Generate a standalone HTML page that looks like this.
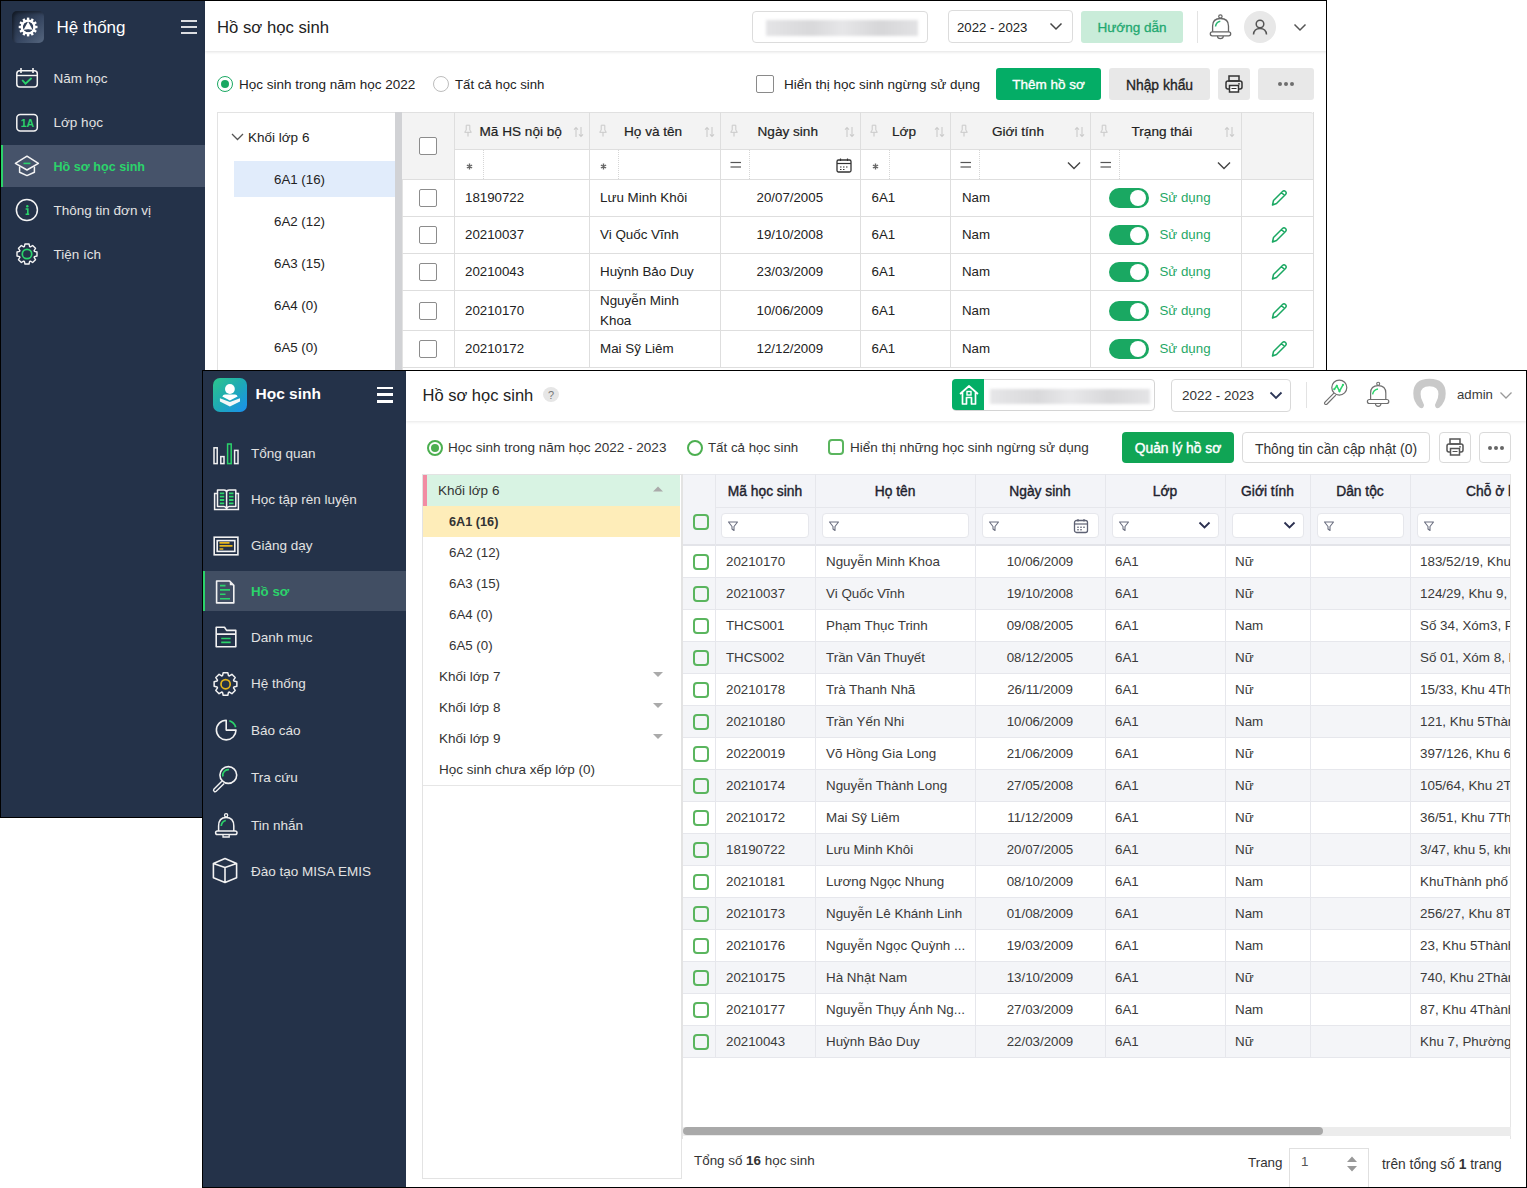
<!DOCTYPE html>
<html><head><meta charset="utf-8">
<style>
*{box-sizing:border-box;margin:0;padding:0}
html,body{width:1527px;height:1188px;overflow:hidden;background:#fff;font-family:"Liberation Sans",sans-serif;}
.a{position:absolute}
.t{position:absolute;white-space:nowrap;font-size:13.5px;color:#212121}
.frame{position:absolute;overflow:hidden;background:#fff}
.brd{position:absolute;border:1px solid #000}
</style></head><body>

<div class="frame" style="left:0;top:0;width:1327px;height:818px">
<div class="a" style="left:0px;top:0px;width:205px;height:818px;background:#243249"></div>
<div class="a" style="left:12px;top:11px;width:32px;height:32px;border-radius:5px;background:linear-gradient(135deg,#1c2739 0%,#354560 55%,#56677f 100%);box-shadow:inset 2px 2px 3px rgba(0,0,0,.35)"></div>
<svg class="a" style="left:12px;top:11px" width="32" height="32" viewBox="0 0 32 32"><g transform="translate(-12,-11)"><rect x="26.9" y="17.6" width="2.4" height="4" fill="#fff" transform="rotate(0 28.1 27)"/><rect x="26.9" y="17.6" width="2.4" height="4" fill="#fff" transform="rotate(30 28.1 27)"/><rect x="26.9" y="17.6" width="2.4" height="4" fill="#fff" transform="rotate(60 28.1 27)"/><rect x="26.9" y="17.6" width="2.4" height="4" fill="#fff" transform="rotate(90 28.1 27)"/><rect x="26.9" y="17.6" width="2.4" height="4" fill="#fff" transform="rotate(120 28.1 27)"/><rect x="26.9" y="17.6" width="2.4" height="4" fill="#fff" transform="rotate(150 28.1 27)"/><rect x="26.9" y="17.6" width="2.4" height="4" fill="#fff" transform="rotate(180 28.1 27)"/><rect x="26.9" y="17.6" width="2.4" height="4" fill="#fff" transform="rotate(210 28.1 27)"/><rect x="26.9" y="17.6" width="2.4" height="4" fill="#fff" transform="rotate(240 28.1 27)"/><rect x="26.9" y="17.6" width="2.4" height="4" fill="#fff" transform="rotate(270 28.1 27)"/><rect x="26.9" y="17.6" width="2.4" height="4" fill="#fff" transform="rotate(300 28.1 27)"/><rect x="26.9" y="17.6" width="2.4" height="4" fill="#fff" transform="rotate(330 28.1 27)"/><circle cx="28.1" cy="27" r="6.4" fill="none" stroke="#fff" stroke-width="2.4"/><path d="M28.1 21.5 L32.6 29.8 Q28.1 28.6 23.6 29.8 Z" fill="#fff"/><path d="M24.3 30.6 Q28.1 29 31.9 30.6 Q28.1 32.4 24.3 30.6 Z" fill="#34445e"/></g></svg>
<div class="t" style="left:56.5px;top:17.5px;line-height:20px;height:20px;font-size:17px;color:#fff">Hệ thống</div>
<div class="a" style="left:181px;top:20px;width:16px;height:2px;background:#dcdde0"></div>
<div class="a" style="left:181px;top:26px;width:16px;height:2px;background:#dcdde0"></div>
<div class="a" style="left:181px;top:32px;width:16px;height:2px;background:#dcdde0"></div>
<div class="a" style="left:0px;top:145px;width:205px;height:42px;background:#46536a"></div>
<div class="a" style="left:0px;top:145px;width:3px;height:42px;background:#2bd36b"></div>
<svg class="a" style="left:10px;top:62px" width="34" height="32" viewBox="0 0 34 32"><g transform="translate(-10,-62)"><rect x="16.8" y="70.8" width="20.5" height="16.3" rx="3" fill="none" stroke="#f4f4f4" stroke-width="1.5"/><line x1="21" y1="68" x2="21" y2="73" stroke="#f4f4f4" stroke-width="1.6"/><line x1="33" y1="68" x2="33" y2="73" stroke="#f4f4f4" stroke-width="1.6"/><line x1="16.8" y1="75.5" x2="37.3" y2="75.5" stroke="#f4f4f4" stroke-width="1.4"/><path d="M22.2 80 L25.5 83.7 L31.6 78" fill="none" stroke="#2bd36b" stroke-width="1.8"/></g></svg>
<div class="t" style="left:53.5px;top:69.0px;line-height:20px;height:20px;font-size:13.5px;color:#e2e2e2">Năm học</div>
<svg class="a" style="left:10px;top:108px" width="34" height="30" viewBox="0 0 34 30"><g transform="translate(-10,-108)"><rect x="16.8" y="114.6" width="20.5" height="16.5" rx="3.5" fill="none" stroke="#f4f4f4" stroke-width="1.5"/><text x="27.3" y="127.1" text-anchor="middle" font-family="Liberation Sans" font-size="10.6" font-weight="bold" fill="#2bd36b" letter-spacing="-0.3">1A</text></g></svg>
<div class="t" style="left:53.5px;top:113.0px;line-height:20px;height:20px;font-size:13.5px;color:#e2e2e2">Lớp học</div>
<svg class="a" style="left:10px;top:150px" width="34" height="32" viewBox="0 0 34 32"><g transform="translate(-10,-150)"><path d="M27 156.2 L38.4 163.4 L27 170 L15.4 163.4 Z" fill="none" stroke="#f4f4f4" stroke-width="1.5" stroke-linejoin="round"/><path d="M19.6 166.5 V172.3 L27 175.6 L34.4 172.3 V166.5" fill="none" stroke="#f4f4f4" stroke-width="1.5" stroke-linejoin="round"/><line x1="23.5" y1="163.4" x2="30.4" y2="163.4" stroke="#2bd36b" stroke-width="1.6"/></g></svg>
<div class="t" style="left:53.5px;top:157.0px;line-height:20px;height:20px;font-size:12.6px;font-weight:bold;color:#2bd36b">Hồ sơ học sinh</div>
<svg class="a" style="left:10px;top:194px" width="34" height="32" viewBox="0 0 34 32"><g transform="translate(-10,-194)"><circle cx="26.9" cy="210" r="10.5" fill="none" stroke="#f4f4f4" stroke-width="1.5"/><circle cx="27.3" cy="206.3" r="1.2" fill="#2bd36b"/><path d="M25.6 209 H27.8 V214 M25.6 214.2 H29.2" fill="none" stroke="#2bd36b" stroke-width="1.6"/></g></svg>
<div class="t" style="left:53.5px;top:201.0px;line-height:20px;height:20px;font-size:13.5px;color:#e2e2e2">Thông tin đơn vị</div>
<svg class="a" style="left:10px;top:238px" width="34" height="32" viewBox="0 0 34 32"><g transform="translate(-10,-238)"><polygon points="24.97,244.00 29.03,244.00 29.63,246.55 30.40,246.87 32.64,245.50 35.50,248.36 34.13,250.60 34.45,251.37 37.00,251.97 37.00,256.03 34.45,256.63 34.13,257.40 35.50,259.64 32.64,262.50 30.40,261.13 29.63,261.45 29.03,264.00 24.97,264.00 24.37,261.45 23.60,261.13 21.36,262.50 18.50,259.64 19.87,257.40 19.55,256.63 17.00,256.03 17.00,251.97 19.55,251.37 19.87,250.60 18.50,248.36 21.36,245.50 23.60,246.87 24.37,246.55" fill="none" stroke="#f4f4f4" stroke-width="1.4" stroke-linejoin="round"/><circle cx="27" cy="254" r="4.7" fill="none" stroke="#2bd36b" stroke-width="1.7"/></g></svg>
<div class="t" style="left:53.5px;top:245.0px;line-height:20px;height:20px;font-size:13.5px;color:#e2e2e2">Tiện ích</div>
<div class="a" style="left:205px;top:0px;width:1122px;height:51px;background:#fff;box-shadow:0 1px 3px rgba(0,0,0,.12)"></div>
<div class="t" style="left:217px;top:18.0px;line-height:20px;height:20px;font-size:16.7px;color:#222">Hồ sơ học sinh</div>
<div class="a" style="left:752px;top:11px;width:176px;height:32px;border:1px solid #dcdcdc;border-radius:4px;background:#fff"></div>
<div class="a" style="left:766px;top:20px;width:152px;height:16px;background:linear-gradient(90deg,#e4e4e6,#d8d8da 30%,#e6e6e8 50%,#d6d6d8 75%,#e2e2e4);filter:blur(1.5px)"></div>
<div class="a" style="left:948px;top:10px;width:125px;height:33px;border:1px solid #dcdcdc;border-radius:4px;background:#fff"></div>
<div class="t" style="left:957px;top:18.0px;line-height:20px;height:20px;font-size:13.2px;color:#222">2022 - 2023</div>
<svg class="a" style="left:1049px;top:22px;" width="14" height="9" viewBox="0 0 14 9"><path d="M1.5 1.5 L7 7 L12.5 1.5" fill="none" stroke="#444" stroke-width="1.5"/></svg>
<div class="a" style="left:1081px;top:11px;width:102px;height:32px;background:#c9ecd9;border-radius:3px"></div>
<div class="t" style="left:1081px;width:102px;text-align:center;top:17.5px;line-height:20px;height:20px;font-size:13.5px;-webkit-text-stroke:0.3px #1fa870;color:#1fa870">Hướng dẫn</div>
<div class="a" style="left:1197px;top:11px;width:1px;height:32px;background:#e3e3e3"></div>
<svg class="a" style="left:1205px;top:10px" width="35" height="35" viewBox="0 0 35 35"><g transform="translate(-1205,-10)"><path d="M1212.6 31.8 V26 Q1212.6 18.5 1220.5 18.5 Q1228.5 18.5 1228.5 26 V31.8" fill="none" stroke="#666" stroke-width="1.3"/><rect x="1210.3" y="31.8" width="20.4" height="4" rx="2" fill="none" stroke="#666" stroke-width="1.3"/><circle cx="1220.4" cy="16.5" r="1.7" fill="none" stroke="#666" stroke-width="1.2"/><path d="M1217.5 36 Q1217.5 38.6 1220.4 38.6 Q1223.3 38.6 1223.3 36" fill="none" stroke="#666" stroke-width="1.2"/><path d="M1215.5 26.5 Q1216 22 1220.3 21.2" fill="none" stroke="#2bb673" stroke-width="1.5"/></g></svg>
<div class="a" style="left:1244px;top:11px;width:32px;height:32px;border-radius:50%;background:#e8e8e8"></div>
<svg class="a" style="left:1250px;top:17px;" width="20" height="20" viewBox="0 0 20 20"><circle cx="10" cy="7" r="3.8" fill="none" stroke="#555" stroke-width="1.5"/><path d="M3.5 17.5 Q4 11.5 10 11.5 Q16 11.5 16.5 17.5" fill="none" stroke="#555" stroke-width="1.5"/></svg>
<svg class="a" style="left:1293px;top:23px;" width="14" height="9" viewBox="0 0 14 9"><path d="M1.5 1.5 L7 7 L12.5 1.5" fill="none" stroke="#555" stroke-width="1.5"/></svg>
<div class="a" style="left:217px;top:76.0px;width:16px;height:16px;border-radius:50%;border:1.5px solid #1aa862;background:#fff"></div>
<div class="a" style="left:221px;top:80.0px;width:8px;height:8px;border-radius:50%;background:#1aa862"></div>
<div class="t" style="left:239px;top:75.0px;line-height:20px;height:20px;font-size:13.5px;color:#222">Học sinh trong năm học 2022</div>
<div class="a" style="left:433px;top:76.0px;width:16px;height:16px;border-radius:50%;border:1px solid #bdbdbd;background:#fff"></div>
<div class="t" style="left:455px;top:75.0px;line-height:20px;height:20px;font-size:13.2px;color:#222">Tất cả học sinh</div>
<div class="a" style="left:756px;top:75px;width:18px;height:18px;border:1px solid #8a8a8a;border-radius:2px;background:#fff"></div>
<div class="t" style="left:784px;top:75.0px;line-height:20px;height:20px;font-size:13.5px;color:#222">Hiển thị học sinh ngừng sử dụng</div>
<div class="a" style="left:996px;top:68px;width:105px;height:32px;background:#04ad66;border-radius:3px"></div>
<div class="t" style="left:996px;width:105px;text-align:center;top:74.5px;line-height:20px;height:20px;font-size:13.5px;-webkit-text-stroke:0.35px #fff;color:#fff">Thêm hồ sơ</div>
<div class="a" style="left:1109px;top:68px;width:101px;height:32px;background:#e8e8e8;border-radius:3px"></div>
<div class="t" style="left:1109px;width:101px;text-align:center;top:74.5px;line-height:20px;height:20px;font-size:13.9px;-webkit-text-stroke:0.3px #222;color:#222">Nhập khẩu</div>
<div class="a" style="left:1218px;top:68px;width:32px;height:32px;background:#e8e8e8;border-radius:3px"></div>
<svg class="a" style="left:1224px;top:74px;" width="20" height="20" viewBox="0 0 20 20"><rect x="5" y="2" width="10" height="5" fill="none" stroke="#333" stroke-width="1.5"/><rect x="2" y="7" width="16" height="8" rx="2" fill="none" stroke="#333" stroke-width="1.5"/><rect x="5.5" y="11.5" width="9" height="6.5" fill="#fff" stroke="#333" stroke-width="1.5"/><line x1="7.5" y1="14.5" x2="12.5" y2="14.5" stroke="#333" stroke-width="1"/><circle cx="15" cy="9.8" r="0.9" fill="#333"/></svg>
<div class="a" style="left:1258px;top:68px;width:56px;height:32px;background:#e8e8e8;border-radius:3px"></div>
<div class="a" style="left:1278px;top:82px;width:4px;height:4px;border-radius:50%;background:#6e6e6e"></div>
<div class="a" style="left:1284px;top:82px;width:4px;height:4px;border-radius:50%;background:#6e6e6e"></div>
<div class="a" style="left:1290px;top:82px;width:4px;height:4px;border-radius:50%;background:#6e6e6e"></div>
<div class="a" style="left:217px;top:112px;width:186px;height:720px;border:1px solid #e3e3e3;background:#fff"></div>
<div class="a" style="left:395px;top:112px;width:7px;height:706px;background:#d1d2d5"></div>
<svg class="a" style="left:231px;top:133px;" width="13" height="8" viewBox="0 0 13 8"><path d="M1 1 L6.5 6.5 L12 1" fill="none" stroke="#555" stroke-width="1.3"/></svg>
<div class="t" style="left:248px;top:128.0px;line-height:20px;height:20px;font-size:13.5px;color:#222">Khối lớp 6</div>
<div class="a" style="left:234px;top:161px;width:161px;height:36px;background:#e1ecfb"></div>
<div class="t" style="left:274px;top:170.0px;line-height:20px;height:20px;font-size:13.3px;color:#222">6A1 (16)</div>
<div class="t" style="left:274px;top:211.5px;line-height:20px;height:20px;font-size:13.3px;color:#222">6A2 (12)</div>
<div class="t" style="left:274px;top:253.5px;line-height:20px;height:20px;font-size:13.3px;color:#222">6A3 (15)</div>
<div class="t" style="left:274px;top:295.5px;line-height:20px;height:20px;font-size:13.3px;color:#222">6A4 (0)</div>
<div class="t" style="left:274px;top:337.5px;line-height:20px;height:20px;font-size:13.3px;color:#222">6A5 (0)</div>
<div class="a" style="left:402px;top:112px;width:912px;height:68px;background:#f3f3f3;border-top:1px solid #e0e0e0;border-top-right-radius:4px"></div>
<div class="a" style="left:454px;top:149px;width:787px;height:30px;background:#fff"></div>
<div class="a" style="left:454px;top:149px;width:787px;height:1px;background:#dedede"></div>
<div class="a" style="left:402px;top:179px;width:912px;height:1px;background:#dedede"></div>
<div class="a" style="left:454px;top:112px;width:1px;height:256px;background:#dedede"></div>
<div class="a" style="left:589px;top:112px;width:1px;height:256px;background:#dedede"></div>
<div class="a" style="left:720px;top:112px;width:1px;height:256px;background:#dedede"></div>
<div class="a" style="left:860px;top:112px;width:1px;height:256px;background:#dedede"></div>
<div class="a" style="left:950px;top:112px;width:1px;height:256px;background:#dedede"></div>
<div class="a" style="left:1090px;top:112px;width:1px;height:256px;background:#dedede"></div>
<div class="a" style="left:1241px;top:112px;width:1px;height:256px;background:#dedede"></div>
<div class="a" style="left:1313px;top:112px;width:1px;height:256px;background:#dedede"></div>
<div class="a" style="left:419px;top:137px;width:18px;height:18px;border:1px solid #8c8c8c;border-radius:2px;background:#fff"></div>
<svg class="a" style="left:463px;top:124px;" width="10" height="14" viewBox="0 0 10 14"><path d="M3.2 1.2 H6.8 V6 L8.3 8.3 H1.7 L3.2 6 Z" fill="none" stroke="#c9c9c9" stroke-width="1" stroke-linejoin="round"/><line x1="5" y1="8.5" x2="5" y2="12.5" stroke="#c9c9c9" stroke-width="1.1"/></svg>
<div class="t" style="left:479.5px;top:121.5px;line-height:20px;height:20px;font-size:13.6px;-webkit-text-stroke:0.2px #222;color:#222">Mã HS nội bộ</div>
<svg class="a" style="left:573px;top:126px;" width="11" height="12" viewBox="0 0 11 12"><path d="M3 11 V1.5 M1 3.6 L3 1.5 L5 3.6 M8 1 V10.5 M6 8.4 L8 10.5 L10 8.4" fill="none" stroke="#cbcbcb" stroke-width="1.1"/></svg>
<svg class="a" style="left:598px;top:124px;" width="10" height="14" viewBox="0 0 10 14"><path d="M3.2 1.2 H6.8 V6 L8.3 8.3 H1.7 L3.2 6 Z" fill="none" stroke="#c9c9c9" stroke-width="1" stroke-linejoin="round"/><line x1="5" y1="8.5" x2="5" y2="12.5" stroke="#c9c9c9" stroke-width="1.1"/></svg>
<div class="t" style="left:624px;top:121.5px;line-height:20px;height:20px;font-size:13.6px;-webkit-text-stroke:0.2px #222;color:#222">Họ và tên</div>
<svg class="a" style="left:703.5px;top:126px;" width="11" height="12" viewBox="0 0 11 12"><path d="M3 11 V1.5 M1 3.6 L3 1.5 L5 3.6 M8 1 V10.5 M6 8.4 L8 10.5 L10 8.4" fill="none" stroke="#cbcbcb" stroke-width="1.1"/></svg>
<svg class="a" style="left:729px;top:124px;" width="10" height="14" viewBox="0 0 10 14"><path d="M3.2 1.2 H6.8 V6 L8.3 8.3 H1.7 L3.2 6 Z" fill="none" stroke="#c9c9c9" stroke-width="1" stroke-linejoin="round"/><line x1="5" y1="8.5" x2="5" y2="12.5" stroke="#c9c9c9" stroke-width="1.1"/></svg>
<div class="t" style="left:757.5px;top:121.5px;line-height:20px;height:20px;font-size:13.6px;-webkit-text-stroke:0.2px #222;color:#222">Ngày sinh</div>
<svg class="a" style="left:844px;top:126px;" width="11" height="12" viewBox="0 0 11 12"><path d="M3 11 V1.5 M1 3.6 L3 1.5 L5 3.6 M8 1 V10.5 M6 8.4 L8 10.5 L10 8.4" fill="none" stroke="#cbcbcb" stroke-width="1.1"/></svg>
<svg class="a" style="left:869px;top:124px;" width="10" height="14" viewBox="0 0 10 14"><path d="M3.2 1.2 H6.8 V6 L8.3 8.3 H1.7 L3.2 6 Z" fill="none" stroke="#c9c9c9" stroke-width="1" stroke-linejoin="round"/><line x1="5" y1="8.5" x2="5" y2="12.5" stroke="#c9c9c9" stroke-width="1.1"/></svg>
<div class="t" style="left:892px;top:121.5px;line-height:20px;height:20px;font-size:13.6px;-webkit-text-stroke:0.2px #222;color:#222">Lớp</div>
<svg class="a" style="left:934px;top:126px;" width="11" height="12" viewBox="0 0 11 12"><path d="M3 11 V1.5 M1 3.6 L3 1.5 L5 3.6 M8 1 V10.5 M6 8.4 L8 10.5 L10 8.4" fill="none" stroke="#cbcbcb" stroke-width="1.1"/></svg>
<svg class="a" style="left:959px;top:124px;" width="10" height="14" viewBox="0 0 10 14"><path d="M3.2 1.2 H6.8 V6 L8.3 8.3 H1.7 L3.2 6 Z" fill="none" stroke="#c9c9c9" stroke-width="1" stroke-linejoin="round"/><line x1="5" y1="8.5" x2="5" y2="12.5" stroke="#c9c9c9" stroke-width="1.1"/></svg>
<div class="t" style="left:992px;top:121.5px;line-height:20px;height:20px;font-size:13.6px;-webkit-text-stroke:0.2px #222;color:#222">Giới tính</div>
<svg class="a" style="left:1074px;top:126px;" width="11" height="12" viewBox="0 0 11 12"><path d="M3 11 V1.5 M1 3.6 L3 1.5 L5 3.6 M8 1 V10.5 M6 8.4 L8 10.5 L10 8.4" fill="none" stroke="#cbcbcb" stroke-width="1.1"/></svg>
<svg class="a" style="left:1099px;top:124px;" width="10" height="14" viewBox="0 0 10 14"><path d="M3.2 1.2 H6.8 V6 L8.3 8.3 H1.7 L3.2 6 Z" fill="none" stroke="#c9c9c9" stroke-width="1" stroke-linejoin="round"/><line x1="5" y1="8.5" x2="5" y2="12.5" stroke="#c9c9c9" stroke-width="1.1"/></svg>
<div class="t" style="left:1131.5px;top:121.5px;line-height:20px;height:20px;font-size:13.6px;-webkit-text-stroke:0.2px #222;color:#222">Trạng thái</div>
<svg class="a" style="left:1224px;top:126px;" width="11" height="12" viewBox="0 0 11 12"><path d="M3 11 V1.5 M1 3.6 L3 1.5 L5 3.6 M8 1 V10.5 M6 8.4 L8 10.5 L10 8.4" fill="none" stroke="#cbcbcb" stroke-width="1.1"/></svg>
<svg class="a" style="left:465px;top:161.5px;" width="9" height="9" viewBox="0 0 9 9"><path d="M4.5 1.5 V7.5 M1.9 3 L7.1 6 M1.9 6 L7.1 3" stroke="#666" stroke-width="1.4"/></svg>
<div class="a" style="left:483px;top:150px;width:1px;height:30px;background:repeating-linear-gradient(180deg,#d6d6d6 0 1px,transparent 1px 2px)"></div>
<svg class="a" style="left:599px;top:161.5px;" width="9" height="9" viewBox="0 0 9 9"><path d="M4.5 1.5 V7.5 M1.9 3 L7.1 6 M1.9 6 L7.1 3" stroke="#666" stroke-width="1.4"/></svg>
<div class="a" style="left:618px;top:150px;width:1px;height:30px;background:repeating-linear-gradient(180deg,#d6d6d6 0 1px,transparent 1px 2px)"></div>
<svg class="a" style="left:730px;top:161px;" width="12" height="8" viewBox="0 0 12 8"><line x1="0.5" y1="1.5" x2="11" y2="1.5" stroke="#555" stroke-width="1.2"/><line x1="0.5" y1="6" x2="11" y2="6" stroke="#555" stroke-width="1.2"/></svg>
<div class="a" style="left:749px;top:150px;width:1px;height:30px;background:repeating-linear-gradient(180deg,#d6d6d6 0 1px,transparent 1px 2px)"></div>
<svg class="a" style="left:836px;top:158px;" width="16" height="15" viewBox="0 0 16 15"><rect x="1" y="2" width="14" height="12" rx="1.5" fill="none" stroke="#333" stroke-width="1.3"/><line x1="1" y1="5.5" x2="15" y2="5.5" stroke="#333" stroke-width="1.2"/><line x1="4.5" y1="0.5" x2="4.5" y2="3" stroke="#333" stroke-width="1.2"/><line x1="11.5" y1="0.5" x2="11.5" y2="3" stroke="#333" stroke-width="1.2"/><path d="M4 9 h1.5 M7 9 h1.5 M10 9 h1.5 M4 11.5 h1.5 M7 11.5 h1.5" stroke="#333" stroke-width="1.2"/></svg>
<svg class="a" style="left:871px;top:161.5px;" width="9" height="9" viewBox="0 0 9 9"><path d="M4.5 1.5 V7.5 M1.9 3 L7.1 6 M1.9 6 L7.1 3" stroke="#666" stroke-width="1.4"/></svg>
<div class="a" style="left:889px;top:150px;width:1px;height:30px;background:repeating-linear-gradient(180deg,#d6d6d6 0 1px,transparent 1px 2px)"></div>
<svg class="a" style="left:960px;top:161px;" width="12" height="8" viewBox="0 0 12 8"><line x1="0.5" y1="1.5" x2="11" y2="1.5" stroke="#555" stroke-width="1.2"/><line x1="0.5" y1="6" x2="11" y2="6" stroke="#555" stroke-width="1.2"/></svg>
<div class="a" style="left:979px;top:150px;width:1px;height:30px;background:repeating-linear-gradient(180deg,#d6d6d6 0 1px,transparent 1px 2px)"></div>
<svg class="a" style="left:1067px;top:161px;" width="14" height="9" viewBox="0 0 14 9"><path d="M1 1.5 L7 7.5 L13 1.5" fill="none" stroke="#444" stroke-width="1.4"/></svg>
<svg class="a" style="left:1100px;top:161px;" width="12" height="8" viewBox="0 0 12 8"><line x1="0.5" y1="1.5" x2="11" y2="1.5" stroke="#555" stroke-width="1.2"/><line x1="0.5" y1="6" x2="11" y2="6" stroke="#555" stroke-width="1.2"/></svg>
<div class="a" style="left:1119px;top:150px;width:1px;height:30px;background:repeating-linear-gradient(180deg,#d6d6d6 0 1px,transparent 1px 2px)"></div>
<svg class="a" style="left:1217px;top:161px;" width="14" height="9" viewBox="0 0 14 9"><path d="M1 1.5 L7 7.5 L13 1.5" fill="none" stroke="#444" stroke-width="1.4"/></svg>
<div class="a" style="left:402px;top:216px;width:912px;height:1px;background:#dedede"></div>
<div class="a" style="left:419px;top:189.0px;width:18px;height:18px;border:1px solid #8c8c8c;border-radius:2px;background:#fff"></div>
<div class="t" style="left:465px;top:188.0px;line-height:20px;height:20px;font-size:13.3px;color:#222">18190722</div>
<div class="t" style="left:600px;top:188.0px;line-height:20px;height:20px;font-size:13.4px;color:#222">Lưu Minh Khôi</div>
<div class="t" style="left:756.5px;top:188.0px;line-height:20px;height:20px;font-size:13.3px;color:#222">20/07/2005</div>
<div class="t" style="left:871.5px;top:188.0px;line-height:20px;height:20px;font-size:13.3px;color:#222">6A1</div>
<div class="t" style="left:962px;top:188.0px;line-height:20px;height:20px;font-size:13.3px;color:#222">Nam</div>
<div class="a" style="left:1109px;top:188.0px;width:40px;height:20px;border-radius:10px;background:#1aa862"></div>
<div class="a" style="left:1130px;top:190.0px;width:16px;height:16px;border-radius:50%;background:#fff"></div>
<div class="t" style="left:1159.5px;top:188.0px;line-height:20px;height:20px;font-size:13.3px;color:#1fa866">Sử dụng</div>
<svg class="a" style="left:1270px;top:189.0px;" width="18" height="18" viewBox="0 0 18 18"><path d="M2.5 16 L3.5 11.5 L12.5 2.5 Q14 1 15.5 2.5 Q17 4 15.5 5.5 L6.5 14.5 Z M11.5 3.5 L14.5 6.5" fill="none" stroke="#1aa862" stroke-width="1.5" stroke-linejoin="round"/></svg>
<div class="a" style="left:402px;top:253px;width:912px;height:1px;background:#dedede"></div>
<div class="a" style="left:419px;top:226.0px;width:18px;height:18px;border:1px solid #8c8c8c;border-radius:2px;background:#fff"></div>
<div class="t" style="left:465px;top:225.0px;line-height:20px;height:20px;font-size:13.3px;color:#222">20210037</div>
<div class="t" style="left:600px;top:225.0px;line-height:20px;height:20px;font-size:13.4px;color:#222">Vi Quốc Vĩnh</div>
<div class="t" style="left:756.5px;top:225.0px;line-height:20px;height:20px;font-size:13.3px;color:#222">19/10/2008</div>
<div class="t" style="left:871.5px;top:225.0px;line-height:20px;height:20px;font-size:13.3px;color:#222">6A1</div>
<div class="t" style="left:962px;top:225.0px;line-height:20px;height:20px;font-size:13.3px;color:#222">Nam</div>
<div class="a" style="left:1109px;top:225.0px;width:40px;height:20px;border-radius:10px;background:#1aa862"></div>
<div class="a" style="left:1130px;top:227.0px;width:16px;height:16px;border-radius:50%;background:#fff"></div>
<div class="t" style="left:1159.5px;top:225.0px;line-height:20px;height:20px;font-size:13.3px;color:#1fa866">Sử dụng</div>
<svg class="a" style="left:1270px;top:226.0px;" width="18" height="18" viewBox="0 0 18 18"><path d="M2.5 16 L3.5 11.5 L12.5 2.5 Q14 1 15.5 2.5 Q17 4 15.5 5.5 L6.5 14.5 Z M11.5 3.5 L14.5 6.5" fill="none" stroke="#1aa862" stroke-width="1.5" stroke-linejoin="round"/></svg>
<div class="a" style="left:402px;top:290px;width:912px;height:1px;background:#dedede"></div>
<div class="a" style="left:419px;top:263.0px;width:18px;height:18px;border:1px solid #8c8c8c;border-radius:2px;background:#fff"></div>
<div class="t" style="left:465px;top:262.0px;line-height:20px;height:20px;font-size:13.3px;color:#222">20210043</div>
<div class="t" style="left:600px;top:262.0px;line-height:20px;height:20px;font-size:13.4px;color:#222">Huỳnh Bảo Duy</div>
<div class="t" style="left:756.5px;top:262.0px;line-height:20px;height:20px;font-size:13.3px;color:#222">23/03/2009</div>
<div class="t" style="left:871.5px;top:262.0px;line-height:20px;height:20px;font-size:13.3px;color:#222">6A1</div>
<div class="t" style="left:962px;top:262.0px;line-height:20px;height:20px;font-size:13.3px;color:#222">Nam</div>
<div class="a" style="left:1109px;top:262.0px;width:40px;height:20px;border-radius:10px;background:#1aa862"></div>
<div class="a" style="left:1130px;top:264.0px;width:16px;height:16px;border-radius:50%;background:#fff"></div>
<div class="t" style="left:1159.5px;top:262.0px;line-height:20px;height:20px;font-size:13.3px;color:#1fa866">Sử dụng</div>
<svg class="a" style="left:1270px;top:263.0px;" width="18" height="18" viewBox="0 0 18 18"><path d="M2.5 16 L3.5 11.5 L12.5 2.5 Q14 1 15.5 2.5 Q17 4 15.5 5.5 L6.5 14.5 Z M11.5 3.5 L14.5 6.5" fill="none" stroke="#1aa862" stroke-width="1.5" stroke-linejoin="round"/></svg>
<div class="a" style="left:402px;top:330px;width:912px;height:1px;background:#dedede"></div>
<div class="a" style="left:419px;top:301.5px;width:18px;height:18px;border:1px solid #8c8c8c;border-radius:2px;background:#fff"></div>
<div class="t" style="left:465px;top:300.5px;line-height:20px;height:20px;font-size:13.3px;color:#222">20210170</div>
<div class="t" style="left:600px;top:290.5px;line-height:20px;font-size:13.4px;color:#222">Nguyễn Minh<br>Khoa</div>
<div class="t" style="left:756.5px;top:300.5px;line-height:20px;height:20px;font-size:13.3px;color:#222">10/06/2009</div>
<div class="t" style="left:871.5px;top:300.5px;line-height:20px;height:20px;font-size:13.3px;color:#222">6A1</div>
<div class="t" style="left:962px;top:300.5px;line-height:20px;height:20px;font-size:13.3px;color:#222">Nam</div>
<div class="a" style="left:1109px;top:300.5px;width:40px;height:20px;border-radius:10px;background:#1aa862"></div>
<div class="a" style="left:1130px;top:302.5px;width:16px;height:16px;border-radius:50%;background:#fff"></div>
<div class="t" style="left:1159.5px;top:300.5px;line-height:20px;height:20px;font-size:13.3px;color:#1fa866">Sử dụng</div>
<svg class="a" style="left:1270px;top:301.5px;" width="18" height="18" viewBox="0 0 18 18"><path d="M2.5 16 L3.5 11.5 L12.5 2.5 Q14 1 15.5 2.5 Q17 4 15.5 5.5 L6.5 14.5 Z M11.5 3.5 L14.5 6.5" fill="none" stroke="#1aa862" stroke-width="1.5" stroke-linejoin="round"/></svg>
<div class="a" style="left:402px;top:367px;width:912px;height:1px;background:#dedede"></div>
<div class="a" style="left:419px;top:340.0px;width:18px;height:18px;border:1px solid #8c8c8c;border-radius:2px;background:#fff"></div>
<div class="t" style="left:465px;top:339.0px;line-height:20px;height:20px;font-size:13.3px;color:#222">20210172</div>
<div class="t" style="left:600px;top:339.0px;line-height:20px;height:20px;font-size:13.4px;color:#222">Mai Sỹ Liêm</div>
<div class="t" style="left:756.5px;top:339.0px;line-height:20px;height:20px;font-size:13.3px;color:#222">12/12/2009</div>
<div class="t" style="left:871.5px;top:339.0px;line-height:20px;height:20px;font-size:13.3px;color:#222">6A1</div>
<div class="t" style="left:962px;top:339.0px;line-height:20px;height:20px;font-size:13.3px;color:#222">Nam</div>
<div class="a" style="left:1109px;top:339.0px;width:40px;height:20px;border-radius:10px;background:#1aa862"></div>
<div class="a" style="left:1130px;top:341.0px;width:16px;height:16px;border-radius:50%;background:#fff"></div>
<div class="t" style="left:1159.5px;top:339.0px;line-height:20px;height:20px;font-size:13.3px;color:#1fa866">Sử dụng</div>
<svg class="a" style="left:1270px;top:340.0px;" width="18" height="18" viewBox="0 0 18 18"><path d="M2.5 16 L3.5 11.5 L12.5 2.5 Q14 1 15.5 2.5 Q17 4 15.5 5.5 L6.5 14.5 Z M11.5 3.5 L14.5 6.5" fill="none" stroke="#1aa862" stroke-width="1.5" stroke-linejoin="round"/></svg>
</div>
<div class="brd" style="left:0;top:0;width:1327px;height:818px"></div>
<div class="frame" style="left:202px;top:370px;width:1325px;height:818px;z-index:10">
<div class="a" style="left:-202px;top:-370px;width:1527px;height:1188px">
<div class="a" style="left:203px;top:370px;width:203px;height:818px;background:#243249"></div>
<div class="a" style="left:213px;top:378px;width:34px;height:34px;border-radius:7px;background:linear-gradient(135deg,#2cc68c 0%,#1eaab5 50%,#1a8ff0 100%)"></div>
<svg class="a" style="left:213px;top:378px" width="34" height="34" viewBox="0 0 34 34"><g transform="translate(-213,-378)"><circle cx="229.9" cy="389" r="4.9" fill="#fff"/><path d="M222.5 396.3 Q223 394.4 225 394.4 H235 Q237 394.4 237.5 396.3 L237.6 396.5 L229.9 400.6 L222.2 396.5 Z" fill="#fff"/><path d="M219.9 398.2 L229.9 402 L240 398.2 V401.6 L229.9 406.6 L219.9 401.6 Z" fill="#f4f8f8"/></g></svg>
<div class="t" style="left:255.5px;top:384.0px;line-height:20px;height:20px;font-size:15.5px;font-weight:bold;color:#fff">Học sinh</div>
<div class="a" style="left:377px;top:386.5px;width:16px;height:2.5px;background:#fff"></div>
<div class="a" style="left:377px;top:393px;width:16px;height:2.5px;background:#fff"></div>
<div class="a" style="left:377px;top:400px;width:16px;height:2.5px;background:#fff"></div>
<div class="a" style="left:203px;top:571px;width:203px;height:40px;background:#414e63"></div>
<div class="a" style="left:203px;top:571px;width:2px;height:40px;background:#2bd36b"></div>
<svg class="a" style="left:208px;top:438px" width="36" height="30" viewBox="0 0 36 30"><g transform="translate(-208,-438)"><rect x="214" y="447.8" width="3.2" height="15.8" fill="none" stroke="#f2f2f2" stroke-width="1.5"/><rect x="220.8" y="456.6" width="3.2" height="7" fill="none" stroke="#f2f2f2" stroke-width="1.5"/><rect x="227.6" y="444" width="3.6" height="19.6" fill="none" stroke="#2bd36b" stroke-width="1.5"/><rect x="234.6" y="450.4" width="3.4" height="13.2" fill="none" stroke="#f2f2f2" stroke-width="1.5"/></g></svg>
<div class="t" style="left:251px;top:444.0px;line-height:20px;height:20px;font-size:13.5px;color:#e2e2e2">Tổng quan</div>
<svg class="a" style="left:208px;top:484px" width="36" height="30" viewBox="0 0 36 30"><g transform="translate(-208,-484)"><path d="M217.5 493.5 H214.6 V509.6 H238.4 V493.5 H235.8" fill="none" stroke="#f2f2f2" stroke-width="1.5"/><path d="M217.5 490 H224 Q226.6 490 226.6 492.6 V508.6 Q225.6 506.5 224 506.5 H217.5 Z M235.8 490 H229.2 Q226.6 490 226.6 492.6 V508.6 Q227.6 506.5 229.2 506.5 H235.8 Z" fill="none" stroke="#f2f2f2" stroke-width="1.5" stroke-linejoin="round"/><path d="M219.8 493.3 h4.4 M219.8 496.6 h4.4 M219.8 500 h4.4 M219.8 503.3 h4.4 M229 493.3 h4.5 M229 496.6 h4.5 M229 500 h4.5 M229 503.3 h4.5" stroke="#2bd36b" stroke-width="1.8"/></g></svg>
<div class="t" style="left:251px;top:490.0px;line-height:20px;height:20px;font-size:13.5px;color:#e2e2e2">Học tập rèn luyện</div>
<svg class="a" style="left:208px;top:532px" width="36" height="28" viewBox="0 0 36 28"><g transform="translate(-208,-532)"><rect x="214.2" y="537.2" width="23.7" height="17.6" fill="none" stroke="#f2f2f2" stroke-width="1.6"/><rect x="217.2" y="540.6" width="17.6" height="10.8" fill="none" stroke="#f2f2f2" stroke-width="1.6"/><path d="M219.5 542.9 h10 M219.5 545.9 h13 M219.5 549 h3.8" stroke="#e5b51c" stroke-width="1.6"/></g></svg>
<div class="t" style="left:251px;top:536.0px;line-height:20px;height:20px;font-size:13.5px;color:#e2e2e2">Giảng dạy</div>
<svg class="a" style="left:208px;top:576px" width="36" height="32" viewBox="0 0 36 32"><g transform="translate(-208,-576)"><path d="M216.6 581 H229.6 L233.8 585.4 V602.9 H216.6 Z" fill="none" stroke="#f2f2f2" stroke-width="1.6" stroke-linejoin="round"/><path d="M229.8 581.5 L233.4 585.3 H229.8 Z" fill="#f2f2f2"/><path d="M220 585.6 h5.5 M220 589.9 h10 M220 594.3 h5.5 M220 598.7 h10" stroke="#2bd36b" stroke-width="1.6"/></g></svg>
<div class="t" style="left:251px;top:582.0px;line-height:20px;height:20px;font-size:13.3px;font-weight:bold;color:#2bd36b">Hồ sơ</div>
<svg class="a" style="left:208px;top:622px" width="36" height="30" viewBox="0 0 36 30"><g transform="translate(-208,-622)"><path d="M216.2 627.2 H224.5 L226.6 630.4 H235.8 V646.8 H216.2 Z M216.2 634.1 H235.8" fill="none" stroke="#f2f2f2" stroke-width="1.6" stroke-linejoin="round"/><path d="M221.2 638.5 h9.4 M221.2 642.4 h9.4" stroke="#2bd36b" stroke-width="1.6"/></g></svg>
<div class="t" style="left:251px;top:628.0px;line-height:20px;height:20px;font-size:13.5px;color:#e2e2e2">Danh mục</div>
<svg class="a" style="left:208px;top:668px" width="36" height="32" viewBox="0 0 36 32"><g transform="translate(-208,-668)"><polygon points="223.20,672.63 227.80,672.63 228.47,675.61 229.33,675.97 231.91,674.33 235.17,677.59 233.53,680.17 233.89,681.03 236.87,681.70 236.87,686.30 233.89,686.97 233.53,687.83 235.17,690.41 231.91,693.67 229.33,692.03 228.47,692.39 227.80,695.37 223.20,695.37 222.53,692.39 221.67,692.03 219.09,693.67 215.83,690.41 217.47,687.83 217.11,686.97 214.13,686.30 214.13,681.70 217.11,681.03 217.47,680.17 215.83,677.59 219.09,674.33 221.67,675.97 222.53,675.61" fill="none" stroke="#f2f2f2" stroke-width="1.5" stroke-linejoin="round"/><circle cx="225.6" cy="684.2" r="4.6" fill="none" stroke="#e5b51c" stroke-width="1.7"/></g></svg>
<div class="t" style="left:251px;top:674.0px;line-height:20px;height:20px;font-size:13.5px;color:#e2e2e2">Hệ thống</div>
<svg class="a" style="left:208px;top:714px" width="36" height="32" viewBox="0 0 36 32"><g transform="translate(-208,-714)"><path d="M226.2 720.3 A9.8 9.8 0 1 0 236 730.1 H226.2 Z" fill="none" stroke="#f2f2f2" stroke-width="1.6" stroke-linejoin="round"/><path d="M229.3 720.8 A9.8 9.8 0 0 1 235.7 727.3" fill="none" stroke="#2bd36b" stroke-width="1.7"/></g></svg>
<div class="t" style="left:251px;top:720.5px;line-height:20px;height:20px;font-size:13.5px;color:#e2e2e2">Báo cáo</div>
<svg class="a" style="left:208px;top:762px" width="36" height="34" viewBox="0 0 36 34"><g transform="translate(-208,-762)"><circle cx="228.3" cy="775" r="8.4" fill="none" stroke="#f2f2f2" stroke-width="1.6"/><path d="M221.8 781.3 L213.8 789.3 Q213 790.8 214.3 791.5 Q215.3 792 216.2 791.2 L224.2 783.4" fill="none" stroke="#f2f2f2" stroke-width="1.4" stroke-linejoin="round"/><path d="M222.9 776.5 A5.6 5.6 0 0 1 229 769.6" fill="none" stroke="#2bd36b" stroke-width="1.7"/></g></svg>
<div class="t" style="left:251px;top:768.0px;line-height:20px;height:20px;font-size:13.5px;color:#e2e2e2">Tra cứu</div>
<svg class="a" style="left:208px;top:810px" width="36" height="32" viewBox="0 0 36 32"><g transform="translate(-208,-810)"><path d="M218.6 831 V826 Q218.6 817.5 226.1 817.5 Q233.8 817.5 233.8 826 V831" fill="none" stroke="#f2f2f2" stroke-width="1.5"/><rect x="215.6" y="831" width="21.4" height="3.6" rx="1.8" fill="none" stroke="#f2f2f2" stroke-width="1.5"/><circle cx="226.1" cy="815.2" r="1.6" fill="none" stroke="#f2f2f2" stroke-width="1.3"/><path d="M223 834.8 V837 H229.2 V834.8" fill="none" stroke="#f2f2f2" stroke-width="1.3"/><path d="M221.2 826 Q221.8 821.3 225.8 820.5" fill="none" stroke="#2bd36b" stroke-width="1.7"/></g></svg>
<div class="t" style="left:251px;top:816.0px;line-height:20px;height:20px;font-size:13.5px;color:#e2e2e2">Tin nhắn</div>
<svg class="a" style="left:208px;top:854px" width="36" height="34" viewBox="0 0 36 34"><g transform="translate(-208,-854)"><path d="M225 858.6 L236.6 863.4 V877.8 L225 882.4 L213.4 877.8 V863.4 Z M213.4 863.4 L225 867.4 L236.6 863.4 M225 867.4 V882.4" fill="none" stroke="#f2f2f2" stroke-width="1.6" stroke-linejoin="round"/></g></svg>
<div class="t" style="left:251px;top:862.0px;line-height:20px;height:20px;font-size:13.5px;color:#e2e2e2">Đào tạo MISA EMIS</div>
<div class="a" style="left:406px;top:371px;width:1120px;height:50px;background:#fff;box-shadow:0 1px 3px rgba(0,0,0,.10)"></div>
<div class="t" style="left:422.5px;top:385.0px;line-height:20px;height:20px;font-size:16.5px;color:#222">Hồ sơ học sinh</div>
<div class="a" style="left:543px;top:387px;width:16px;height:15px;border-radius:50%;background:#e6e6e6"></div>
<div class="t" style="left:543px;width:16px;text-align:center;top:385.0px;line-height:20px;height:20px;font-size:11px;color:#777">?</div>
<div class="a" style="left:952px;top:379px;width:203px;height:32px;border:1px solid #d4d4d4;border-radius:4px;background:#fff"></div>
<div class="a" style="left:952px;top:379px;width:32px;height:31px;background:#03ae66;border-radius:4px 0 0 4px"></div>
<svg class="a" style="left:956px;top:382px;" width="26" height="26" viewBox="0 0 26 26"><path d="M4 12 L13 4 L22 12 M6.5 10 V22 H10.5 V15.5 H15.5 V22 H19.5 V10" fill="none" stroke="#fff" stroke-width="1.7" stroke-linejoin="round"/><rect x="11" y="9.5" width="4" height="3.5" fill="none" stroke="#fff" stroke-width="1.4"/></svg>
<div class="a" style="left:990px;top:389px;width:160px;height:15px;background:linear-gradient(90deg,#e6e6e8,#d9d9db 30%,#e8e8ea 50%,#d8d8da 75%,#e4e4e6);filter:blur(1.5px)"></div>
<div class="a" style="left:1171px;top:379px;width:120px;height:33px;border:1px solid #d9d9d9;border-radius:4px;background:#fff"></div>
<div class="t" style="left:1182px;top:385.5px;line-height:20px;height:20px;font-size:13.5px;color:#333">2022 - 2023</div>
<svg class="a" style="left:1269px;top:391px;" width="14" height="9" viewBox="0 0 14 9"><path d="M1.5 1.5 L7 7 L12.5 1.5" fill="none" stroke="#2b3556" stroke-width="1.8"/></svg>
<div class="a" style="left:1306px;top:382px;width:1px;height:26px;background:#e3e3e3"></div>
<svg class="a" style="left:1318px;top:376px" width="34" height="32" viewBox="0 0 34 32"><g transform="translate(-1318,-376)"><circle cx="1339.3" cy="387.6" r="7.5" fill="none" stroke="#6f6f6f" stroke-width="1.2"/><path d="M1333.9 393.2 L1325 402.1 Q1324 403.3 1325.1 404.2 Q1326.1 404.9 1327.1 404 L1335.8 395.2" fill="none" stroke="#6f6f6f" stroke-width="1.2" stroke-linejoin="round"/><path d="M1334.3 389.2 L1336.8 385.9 L1339.5 391.2 L1343 384.8" fill="none" stroke="#2bd36b" stroke-width="1.5"/><circle cx="1334.3" cy="389.2" r="1.1" fill="#2bd36b"/><circle cx="1336.8" cy="385.9" r="1.1" fill="#2bd36b"/><circle cx="1339.5" cy="391.2" r="1.1" fill="#2bd36b"/><circle cx="1343" cy="384.8" r="1.1" fill="#2bd36b"/></g></svg>
<svg class="a" style="left:1362px;top:378px" width="32" height="32" viewBox="0 0 32 32"><g transform="translate(-1362,-378)"><path d="M1370.6 399.5 V393 Q1370.6 385.6 1378.2 385.6 Q1385.8 385.6 1385.8 393 V399.5" fill="none" stroke="#6f6f6f" stroke-width="1.2"/><rect x="1367.4" y="399.5" width="21.4" height="4" rx="2" fill="none" stroke="#6f6f6f" stroke-width="1.2"/><circle cx="1378.2" cy="383.7" r="1.5" fill="none" stroke="#6f6f6f" stroke-width="1.1"/><path d="M1375.4 403.8 Q1375.6 406.4 1378.2 406.4 Q1380.8 406.4 1381 403.8" fill="none" stroke="#6f6f6f" stroke-width="1.1"/><path d="M1372.6 394.3 Q1373.3 389.8 1378 389" fill="none" stroke="#2bd36b" stroke-width="1.4"/></g></svg>
<svg class="a" style="left:1408px;top:374px" width="44" height="40" viewBox="0 0 44 40"><g transform="translate(-1408,-374)"><path d="M1419.5 407.5 Q1413.3 402 1413.3 393.5 Q1413.3 378.8 1429.5 378.8 Q1445.7 378.8 1445.7 393.5 Q1445.7 402 1439.5 407.5 Q1437 409.3 1435.5 407 Q1434.3 405 1436.2 402 Q1438.4 398.5 1438.4 394 Q1438.4 386.2 1429.5 386.2 Q1420.6 386.2 1420.6 394 Q1420.6 398.5 1422.8 402 Q1424.7 405 1423.5 407 Q1422 409.3 1419.5 407.5 Z" fill="#c9c9c9"/></g></svg>
<div class="t" style="left:1457px;top:385.0px;line-height:20px;height:20px;font-size:13.2px;color:#3a3a3a">admin</div>
<svg class="a" style="left:1499px;top:391px;" width="14" height="9" viewBox="0 0 14 9"><path d="M1.5 1.5 L7 7 L12.5 1.5" fill="none" stroke="#999" stroke-width="1.3"/></svg>
<div class="a" style="left:427px;top:440px;width:16px;height:16px;border-radius:50%;border:2px solid #4caf50;background:#fff"></div>
<div class="a" style="left:431px;top:444px;width:8px;height:8px;border-radius:50%;background:#4caf50"></div>
<div class="t" style="left:448px;top:438.0px;line-height:20px;height:20px;font-size:13.5px;color:#333">Học sinh trong năm học 2022 - 2023</div>
<div class="a" style="left:687px;top:440px;width:16px;height:16px;border-radius:50%;border:2px solid #4caf50;background:#fff"></div>
<div class="t" style="left:708px;top:438.0px;line-height:20px;height:20px;font-size:13.3px;color:#333">Tất cả học sinh</div>
<div class="a" style="left:828px;top:439px;width:16px;height:16px;border:2px solid #5ab55e;border-radius:4px;background:#fff"></div>
<div class="t" style="left:850px;top:438.0px;line-height:20px;height:20px;font-size:13.5px;color:#333">Hiển thị những học sinh ngừng sử dụng</div>
<div class="a" style="left:1122px;top:432px;width:112px;height:31px;background:#10a555;border-radius:4px"></div>
<div class="t" style="left:1122px;width:112px;text-align:center;top:439.0px;line-height:20px;height:20px;font-size:13.8px;-webkit-text-stroke:0.4px #fff;color:#fff">Quản lý hồ sơ</div>
<div class="a" style="left:1242px;top:432px;width:188px;height:31px;border:1px solid #dadada;border-radius:4px;background:#fff"></div>
<div class="t" style="left:1242px;width:188px;text-align:center;top:438.5px;line-height:20px;height:20px;font-size:13.9px;color:#333">Thông tin cần cập nhật (0)</div>
<div class="a" style="left:1439px;top:432px;width:32px;height:31px;border:1px solid #dadada;border-radius:4px;background:#fff"></div>
<svg class="a" style="left:1445px;top:437px;" width="20" height="20" viewBox="0 0 20 20"><rect x="5" y="2" width="10" height="5" fill="none" stroke="#555" stroke-width="1.5"/><rect x="2" y="7" width="16" height="8" rx="2" fill="none" stroke="#555" stroke-width="1.5"/><rect x="5.5" y="11.5" width="9" height="6.5" fill="#fff" stroke="#555" stroke-width="1.5"/><line x1="7.5" y1="14.5" x2="12.5" y2="14.5" stroke="#555" stroke-width="1"/><circle cx="15" cy="9.8" r="0.9" fill="#555"/></svg>
<div class="a" style="left:1479px;top:432px;width:32px;height:31px;border:1px solid #dadada;border-radius:4px;background:#fff"></div>
<div class="a" style="left:1488px;top:446px;width:4px;height:4px;border-radius:50%;background:#666"></div>
<div class="a" style="left:1494px;top:446px;width:4px;height:4px;border-radius:50%;background:#666"></div>
<div class="a" style="left:1500px;top:446px;width:4px;height:4px;border-radius:50%;background:#666"></div>
<div class="a" style="left:422px;top:474px;width:260px;height:705px;border:1px solid #e3e3e3;background:#fff"></div>
<div class="a" style="left:423px;top:475px;width:257px;height:31px;background:#d8f3e3"></div>
<div class="a" style="left:423px;top:475px;width:4px;height:31px;background:#f28ca3"></div>
<div class="t" style="left:438px;top:480.5px;line-height:20px;height:20px;font-size:13.5px;color:#333">Khối lớp 6</div>
<svg class="a" style="left:652px;top:485px;" width="12" height="7" viewBox="0 0 12 7"><path d="M1 6.5 L6 1.5 L11 6.5 Z" fill="#aaa"/></svg>
<div class="a" style="left:423px;top:506px;width:257px;height:31px;background:#feedb9"></div>
<div class="t" style="left:449px;top:511.5px;line-height:20px;height:20px;font-size:12.7px;font-weight:bold;color:#333">6A1 (16)</div>
<div class="t" style="left:449px;top:542.5px;line-height:20px;height:20px;font-size:13.3px;color:#333">6A2 (12)</div>
<div class="t" style="left:449px;top:573.5px;line-height:20px;height:20px;font-size:13.3px;color:#333">6A3 (15)</div>
<div class="t" style="left:449px;top:604.5px;line-height:20px;height:20px;font-size:13.3px;color:#333">6A4 (0)</div>
<div class="t" style="left:449px;top:635.5px;line-height:20px;height:20px;font-size:13.3px;color:#333">6A5 (0)</div>
<div class="t" style="left:439px;top:666.5px;line-height:20px;height:20px;font-size:13.5px;color:#333">Khối lớp 7</div>
<svg class="a" style="left:652px;top:670.5px;" width="12" height="7" viewBox="0 0 12 7"><path d="M1 1 L6 6 L11 1 Z" fill="#aaa"/></svg>
<div class="t" style="left:439px;top:697.5px;line-height:20px;height:20px;font-size:13.5px;color:#333">Khối lớp 8</div>
<svg class="a" style="left:652px;top:701.5px;" width="12" height="7" viewBox="0 0 12 7"><path d="M1 1 L6 6 L11 1 Z" fill="#aaa"/></svg>
<div class="t" style="left:439px;top:728.5px;line-height:20px;height:20px;font-size:13.5px;color:#333">Khối lớp 9</div>
<svg class="a" style="left:652px;top:732.5px;" width="12" height="7" viewBox="0 0 12 7"><path d="M1 1 L6 6 L11 1 Z" fill="#aaa"/></svg>
<div class="t" style="left:439px;top:759.5px;line-height:20px;height:20px;font-size:13.5px;color:#333">Học sinh chưa xếp lớp (0)</div>
<div class="a" style="left:423px;top:785px;width:258px;height:1px;background:#e6e6e6"></div>
<div class="a" style="left:681px;top:474px;width:830px;height:665px;overflow:hidden">
<div class="a" style="left:0px;top:0px;width:830px;height:72px;background:#f3f4f8"></div>
<div class="a" style="left:0px;top:0px;width:830px;height:1px;background:#e8e9ee"></div>
<div class="a" style="left:34px;top:33px;width:796px;height:1px;background:#e6e7ec"></div>
<div class="a" style="left:0px;top:70px;width:830px;height:2px;background:#e3e4e9"></div>
<div class="t" style="left:34px;width:100px;text-align:center;top:7.5px;line-height:20px;height:20px;font-size:13.8px;-webkit-text-stroke:0.4px #1f1f2e;color:#1f1f2e">Mã học sinh</div>
<div class="t" style="left:134px;width:160px;text-align:center;top:7.5px;line-height:20px;height:20px;font-size:13.8px;-webkit-text-stroke:0.4px #1f1f2e;color:#1f1f2e">Họ tên</div>
<div class="t" style="left:294px;width:130px;text-align:center;top:7.5px;line-height:20px;height:20px;font-size:13.8px;-webkit-text-stroke:0.4px #1f1f2e;color:#1f1f2e">Ngày sinh</div>
<div class="t" style="left:424px;width:120px;text-align:center;top:7.5px;line-height:20px;height:20px;font-size:13.8px;-webkit-text-stroke:0.4px #1f1f2e;color:#1f1f2e">Lớp</div>
<div class="t" style="left:544px;width:85px;text-align:center;top:7.5px;line-height:20px;height:20px;font-size:13.8px;-webkit-text-stroke:0.4px #1f1f2e;color:#1f1f2e">Giới tính</div>
<div class="t" style="left:629px;width:100px;text-align:center;top:7.5px;line-height:20px;height:20px;font-size:13.8px;-webkit-text-stroke:0.4px #1f1f2e;color:#1f1f2e">Dân tộc</div>
<div class="t" style="left:785px;top:7.5px;line-height:20px;height:20px;font-size:13.8px;-webkit-text-stroke:0.4px #1f1f2e;color:#1f1f2e">Chỗ ở hiện tại</div>
<div class="a" style="left:12px;top:40px;width:16px;height:16px;border:2px solid #5ab55e;border-radius:4px;background:transparent"></div>
<div class="a" style="left:40px;top:39px;width:88px;height:25px;background:#fff;border:1px solid #e6e7ec;border-radius:4px"></div>
<svg class="a" style="left:46px;top:46px;" width="12" height="12" viewBox="0 0 12 12"><path d="M1.5 2 H10.5 L7 6.5 V10.5 L5 9 V6.5 Z" fill="none" stroke="#6b6f80" stroke-width="1.1" stroke-linejoin="round"/></svg>
<div class="a" style="left:141px;top:39px;width:147px;height:25px;background:#fff;border:1px solid #e6e7ec;border-radius:4px"></div>
<svg class="a" style="left:147px;top:46px;" width="12" height="12" viewBox="0 0 12 12"><path d="M1.5 2 H10.5 L7 6.5 V10.5 L5 9 V6.5 Z" fill="none" stroke="#6b6f80" stroke-width="1.1" stroke-linejoin="round"/></svg>
<div class="a" style="left:301px;top:39px;width:117px;height:25px;background:#fff;border:1px solid #e6e7ec;border-radius:4px"></div>
<svg class="a" style="left:307px;top:46px;" width="12" height="12" viewBox="0 0 12 12"><path d="M1.5 2 H10.5 L7 6.5 V10.5 L5 9 V6.5 Z" fill="none" stroke="#6b6f80" stroke-width="1.1" stroke-linejoin="round"/></svg>
<svg class="a" style="left:392px;top:44px;" width="16" height="16" viewBox="0 0 16 16"><rect x="1.5" y="2.5" width="13" height="12" rx="2" fill="none" stroke="#5e6274" stroke-width="1.3"/><line x1="1.5" y1="6" x2="14.5" y2="6" stroke="#5e6274" stroke-width="1.2"/><line x1="5" y1="1" x2="5" y2="3.5" stroke="#5e6274" stroke-width="1.2"/><line x1="11" y1="1" x2="11" y2="3.5" stroke="#5e6274" stroke-width="1.2"/><path d="M4 9.2 h2 M7 9.2 h2 M10 9.2 h2 M4 11.8 h2 M7 11.8 h2" stroke="#5e6274" stroke-width="1"/></svg>
<div class="a" style="left:431px;top:39px;width:107px;height:25px;background:#fff;border:1px solid #e6e7ec;border-radius:4px"></div>
<svg class="a" style="left:437px;top:46px;" width="12" height="12" viewBox="0 0 12 12"><path d="M1.5 2 H10.5 L7 6.5 V10.5 L5 9 V6.5 Z" fill="none" stroke="#6b6f80" stroke-width="1.1" stroke-linejoin="round"/></svg>
<svg class="a" style="left:517px;top:47px;" width="13" height="9" viewBox="0 0 13 9"><path d="M1.5 1.5 L6.5 6.5 L11.5 1.5" fill="none" stroke="#2b3050" stroke-width="1.8"/></svg>
<div class="a" style="left:551px;top:39px;width:72px;height:25px;background:#fff;border:1px solid #e6e7ec;border-radius:4px"></div>
<svg class="a" style="left:602px;top:47px;" width="13" height="9" viewBox="0 0 13 9"><path d="M1.5 1.5 L6.5 6.5 L11.5 1.5" fill="none" stroke="#2b3050" stroke-width="1.8"/></svg>
<div class="a" style="left:636px;top:39px;width:87px;height:25px;background:#fff;border:1px solid #e6e7ec;border-radius:4px"></div>
<svg class="a" style="left:642px;top:46px;" width="12" height="12" viewBox="0 0 12 12"><path d="M1.5 2 H10.5 L7 6.5 V10.5 L5 9 V6.5 Z" fill="none" stroke="#6b6f80" stroke-width="1.1" stroke-linejoin="round"/></svg>
<div class="a" style="left:736px;top:39px;width:143px;height:25px;background:#fff;border:1px solid #e6e7ec;border-radius:4px"></div>
<svg class="a" style="left:742px;top:46px;" width="12" height="12" viewBox="0 0 12 12"><path d="M1.5 2 H10.5 L7 6.5 V10.5 L5 9 V6.5 Z" fill="none" stroke="#6b6f80" stroke-width="1.1" stroke-linejoin="round"/></svg>
<div class="a" style="left:2px;top:72px;width:828px;height:31px;background:#ffffff"></div>
<div class="a" style="left:0px;top:103px;width:830px;height:1px;background:#e6e7ec"></div>
<div class="a" style="left:12px;top:80px;width:16px;height:16px;border:2px solid #5ab55e;border-radius:4px;background:transparent"></div>
<div class="t" style="left:45px;top:77.5px;line-height:20px;height:20px;font-size:13.3px;color:#3a3a3a">20210170</div>
<div class="t" style="left:145px;top:77.5px;line-height:20px;height:20px;font-size:13.4px;color:#3a3a3a">Nguyễn Minh Khoa</div>
<div class="t" style="left:294px;width:130px;text-align:center;top:77.5px;line-height:20px;height:20px;font-size:13.3px;color:#3a3a3a">10/06/2009</div>
<div class="t" style="left:434px;top:77.5px;line-height:20px;height:20px;font-size:13.3px;color:#3a3a3a">6A1</div>
<div class="t" style="left:554px;top:77.5px;line-height:20px;height:20px;font-size:13.4px;color:#3a3a3a">Nữ</div>
<div class="t" style="left:739px;top:77.5px;line-height:20px;height:20px;font-size:13.4px;color:#3a3a3a">183/52/19, Khu 3</div>
<div class="a" style="left:2px;top:104px;width:828px;height:31px;background:#f4f5f8"></div>
<div class="a" style="left:0px;top:135px;width:830px;height:1px;background:#e6e7ec"></div>
<div class="a" style="left:12px;top:112px;width:16px;height:16px;border:2px solid #5ab55e;border-radius:4px;background:transparent"></div>
<div class="t" style="left:45px;top:109.5px;line-height:20px;height:20px;font-size:13.3px;color:#3a3a3a">20210037</div>
<div class="t" style="left:145px;top:109.5px;line-height:20px;height:20px;font-size:13.4px;color:#3a3a3a">Vi Quốc Vĩnh</div>
<div class="t" style="left:294px;width:130px;text-align:center;top:109.5px;line-height:20px;height:20px;font-size:13.3px;color:#3a3a3a">19/10/2008</div>
<div class="t" style="left:434px;top:109.5px;line-height:20px;height:20px;font-size:13.3px;color:#3a3a3a">6A1</div>
<div class="t" style="left:554px;top:109.5px;line-height:20px;height:20px;font-size:13.4px;color:#3a3a3a">Nữ</div>
<div class="t" style="left:739px;top:109.5px;line-height:20px;height:20px;font-size:13.4px;color:#3a3a3a">124/29, Khu 9, T</div>
<div class="a" style="left:2px;top:136px;width:828px;height:31px;background:#ffffff"></div>
<div class="a" style="left:0px;top:167px;width:830px;height:1px;background:#e6e7ec"></div>
<div class="a" style="left:12px;top:144px;width:16px;height:16px;border:2px solid #5ab55e;border-radius:4px;background:transparent"></div>
<div class="t" style="left:45px;top:141.5px;line-height:20px;height:20px;font-size:13.3px;color:#3a3a3a">THCS001</div>
<div class="t" style="left:145px;top:141.5px;line-height:20px;height:20px;font-size:13.4px;color:#3a3a3a">Phạm Thục Trinh</div>
<div class="t" style="left:294px;width:130px;text-align:center;top:141.5px;line-height:20px;height:20px;font-size:13.3px;color:#3a3a3a">09/08/2005</div>
<div class="t" style="left:434px;top:141.5px;line-height:20px;height:20px;font-size:13.3px;color:#3a3a3a">6A1</div>
<div class="t" style="left:554px;top:141.5px;line-height:20px;height:20px;font-size:13.4px;color:#3a3a3a">Nam</div>
<div class="t" style="left:739px;top:141.5px;line-height:20px;height:20px;font-size:13.4px;color:#3a3a3a">Số 34, Xóm3, Ph</div>
<div class="a" style="left:2px;top:168px;width:828px;height:31px;background:#f4f5f8"></div>
<div class="a" style="left:0px;top:199px;width:830px;height:1px;background:#e6e7ec"></div>
<div class="a" style="left:12px;top:176px;width:16px;height:16px;border:2px solid #5ab55e;border-radius:4px;background:transparent"></div>
<div class="t" style="left:45px;top:173.5px;line-height:20px;height:20px;font-size:13.3px;color:#3a3a3a">THCS002</div>
<div class="t" style="left:145px;top:173.5px;line-height:20px;height:20px;font-size:13.4px;color:#3a3a3a">Trần Văn Thuyết</div>
<div class="t" style="left:294px;width:130px;text-align:center;top:173.5px;line-height:20px;height:20px;font-size:13.3px;color:#3a3a3a">08/12/2005</div>
<div class="t" style="left:434px;top:173.5px;line-height:20px;height:20px;font-size:13.3px;color:#3a3a3a">6A1</div>
<div class="t" style="left:554px;top:173.5px;line-height:20px;height:20px;font-size:13.4px;color:#3a3a3a">Nữ</div>
<div class="t" style="left:739px;top:173.5px;line-height:20px;height:20px;font-size:13.4px;color:#3a3a3a">Số 01, Xóm 8, Ph</div>
<div class="a" style="left:2px;top:200px;width:828px;height:31px;background:#ffffff"></div>
<div class="a" style="left:0px;top:231px;width:830px;height:1px;background:#e6e7ec"></div>
<div class="a" style="left:12px;top:208px;width:16px;height:16px;border:2px solid #5ab55e;border-radius:4px;background:transparent"></div>
<div class="t" style="left:45px;top:205.5px;line-height:20px;height:20px;font-size:13.3px;color:#3a3a3a">20210178</div>
<div class="t" style="left:145px;top:205.5px;line-height:20px;height:20px;font-size:13.4px;color:#3a3a3a">Trà Thanh Nhã</div>
<div class="t" style="left:294px;width:130px;text-align:center;top:205.5px;line-height:20px;height:20px;font-size:13.3px;color:#3a3a3a">26/11/2009</div>
<div class="t" style="left:434px;top:205.5px;line-height:20px;height:20px;font-size:13.3px;color:#3a3a3a">6A1</div>
<div class="t" style="left:554px;top:205.5px;line-height:20px;height:20px;font-size:13.4px;color:#3a3a3a">Nữ</div>
<div class="t" style="left:739px;top:205.5px;line-height:20px;height:20px;font-size:13.4px;color:#3a3a3a">15/33, Khu 4Thà</div>
<div class="a" style="left:2px;top:232px;width:828px;height:31px;background:#f4f5f8"></div>
<div class="a" style="left:0px;top:263px;width:830px;height:1px;background:#e6e7ec"></div>
<div class="a" style="left:12px;top:240px;width:16px;height:16px;border:2px solid #5ab55e;border-radius:4px;background:transparent"></div>
<div class="t" style="left:45px;top:237.5px;line-height:20px;height:20px;font-size:13.3px;color:#3a3a3a">20210180</div>
<div class="t" style="left:145px;top:237.5px;line-height:20px;height:20px;font-size:13.4px;color:#3a3a3a">Trần Yến Nhi</div>
<div class="t" style="left:294px;width:130px;text-align:center;top:237.5px;line-height:20px;height:20px;font-size:13.3px;color:#3a3a3a">10/06/2009</div>
<div class="t" style="left:434px;top:237.5px;line-height:20px;height:20px;font-size:13.3px;color:#3a3a3a">6A1</div>
<div class="t" style="left:554px;top:237.5px;line-height:20px;height:20px;font-size:13.4px;color:#3a3a3a">Nam</div>
<div class="t" style="left:739px;top:237.5px;line-height:20px;height:20px;font-size:13.4px;color:#3a3a3a">121, Khu 5Thành</div>
<div class="a" style="left:2px;top:264px;width:828px;height:31px;background:#ffffff"></div>
<div class="a" style="left:0px;top:295px;width:830px;height:1px;background:#e6e7ec"></div>
<div class="a" style="left:12px;top:272px;width:16px;height:16px;border:2px solid #5ab55e;border-radius:4px;background:transparent"></div>
<div class="t" style="left:45px;top:269.5px;line-height:20px;height:20px;font-size:13.3px;color:#3a3a3a">20220019</div>
<div class="t" style="left:145px;top:269.5px;line-height:20px;height:20px;font-size:13.4px;color:#3a3a3a">Võ Hồng Gia Long</div>
<div class="t" style="left:294px;width:130px;text-align:center;top:269.5px;line-height:20px;height:20px;font-size:13.3px;color:#3a3a3a">21/06/2009</div>
<div class="t" style="left:434px;top:269.5px;line-height:20px;height:20px;font-size:13.3px;color:#3a3a3a">6A1</div>
<div class="t" style="left:554px;top:269.5px;line-height:20px;height:20px;font-size:13.4px;color:#3a3a3a">Nữ</div>
<div class="t" style="left:739px;top:269.5px;line-height:20px;height:20px;font-size:13.4px;color:#3a3a3a">397/126, Khu 6T</div>
<div class="a" style="left:2px;top:296px;width:828px;height:31px;background:#f4f5f8"></div>
<div class="a" style="left:0px;top:327px;width:830px;height:1px;background:#e6e7ec"></div>
<div class="a" style="left:12px;top:304px;width:16px;height:16px;border:2px solid #5ab55e;border-radius:4px;background:transparent"></div>
<div class="t" style="left:45px;top:301.5px;line-height:20px;height:20px;font-size:13.3px;color:#3a3a3a">20210174</div>
<div class="t" style="left:145px;top:301.5px;line-height:20px;height:20px;font-size:13.4px;color:#3a3a3a">Nguyễn Thành Long</div>
<div class="t" style="left:294px;width:130px;text-align:center;top:301.5px;line-height:20px;height:20px;font-size:13.3px;color:#3a3a3a">27/05/2008</div>
<div class="t" style="left:434px;top:301.5px;line-height:20px;height:20px;font-size:13.3px;color:#3a3a3a">6A1</div>
<div class="t" style="left:554px;top:301.5px;line-height:20px;height:20px;font-size:13.4px;color:#3a3a3a">Nữ</div>
<div class="t" style="left:739px;top:301.5px;line-height:20px;height:20px;font-size:13.4px;color:#3a3a3a">105/64, Khu 2Th</div>
<div class="a" style="left:2px;top:328px;width:828px;height:31px;background:#ffffff"></div>
<div class="a" style="left:0px;top:359px;width:830px;height:1px;background:#e6e7ec"></div>
<div class="a" style="left:12px;top:336px;width:16px;height:16px;border:2px solid #5ab55e;border-radius:4px;background:transparent"></div>
<div class="t" style="left:45px;top:333.5px;line-height:20px;height:20px;font-size:13.3px;color:#3a3a3a">20210172</div>
<div class="t" style="left:145px;top:333.5px;line-height:20px;height:20px;font-size:13.4px;color:#3a3a3a">Mai Sỹ Liêm</div>
<div class="t" style="left:294px;width:130px;text-align:center;top:333.5px;line-height:20px;height:20px;font-size:13.3px;color:#3a3a3a">11/12/2009</div>
<div class="t" style="left:434px;top:333.5px;line-height:20px;height:20px;font-size:13.3px;color:#3a3a3a">6A1</div>
<div class="t" style="left:554px;top:333.5px;line-height:20px;height:20px;font-size:13.4px;color:#3a3a3a">Nữ</div>
<div class="t" style="left:739px;top:333.5px;line-height:20px;height:20px;font-size:13.4px;color:#3a3a3a">36/51, Khu 7Thà</div>
<div class="a" style="left:2px;top:360px;width:828px;height:31px;background:#f4f5f8"></div>
<div class="a" style="left:0px;top:391px;width:830px;height:1px;background:#e6e7ec"></div>
<div class="a" style="left:12px;top:368px;width:16px;height:16px;border:2px solid #5ab55e;border-radius:4px;background:transparent"></div>
<div class="t" style="left:45px;top:365.5px;line-height:20px;height:20px;font-size:13.3px;color:#3a3a3a">18190722</div>
<div class="t" style="left:145px;top:365.5px;line-height:20px;height:20px;font-size:13.4px;color:#3a3a3a">Lưu Minh Khôi</div>
<div class="t" style="left:294px;width:130px;text-align:center;top:365.5px;line-height:20px;height:20px;font-size:13.3px;color:#3a3a3a">20/07/2005</div>
<div class="t" style="left:434px;top:365.5px;line-height:20px;height:20px;font-size:13.3px;color:#3a3a3a">6A1</div>
<div class="t" style="left:554px;top:365.5px;line-height:20px;height:20px;font-size:13.4px;color:#3a3a3a">Nữ</div>
<div class="t" style="left:739px;top:365.5px;line-height:20px;height:20px;font-size:13.4px;color:#3a3a3a">3/47, khu 5, khu</div>
<div class="a" style="left:2px;top:392px;width:828px;height:31px;background:#ffffff"></div>
<div class="a" style="left:0px;top:423px;width:830px;height:1px;background:#e6e7ec"></div>
<div class="a" style="left:12px;top:400px;width:16px;height:16px;border:2px solid #5ab55e;border-radius:4px;background:transparent"></div>
<div class="t" style="left:45px;top:397.5px;line-height:20px;height:20px;font-size:13.3px;color:#3a3a3a">20210181</div>
<div class="t" style="left:145px;top:397.5px;line-height:20px;height:20px;font-size:13.4px;color:#3a3a3a">Lương Ngọc Nhung</div>
<div class="t" style="left:294px;width:130px;text-align:center;top:397.5px;line-height:20px;height:20px;font-size:13.3px;color:#3a3a3a">08/10/2009</div>
<div class="t" style="left:434px;top:397.5px;line-height:20px;height:20px;font-size:13.3px;color:#3a3a3a">6A1</div>
<div class="t" style="left:554px;top:397.5px;line-height:20px;height:20px;font-size:13.4px;color:#3a3a3a">Nam</div>
<div class="t" style="left:739px;top:397.5px;line-height:20px;height:20px;font-size:13.4px;color:#3a3a3a">KhuThành phố B</div>
<div class="a" style="left:2px;top:424px;width:828px;height:31px;background:#f4f5f8"></div>
<div class="a" style="left:0px;top:455px;width:830px;height:1px;background:#e6e7ec"></div>
<div class="a" style="left:12px;top:432px;width:16px;height:16px;border:2px solid #5ab55e;border-radius:4px;background:transparent"></div>
<div class="t" style="left:45px;top:429.5px;line-height:20px;height:20px;font-size:13.3px;color:#3a3a3a">20210173</div>
<div class="t" style="left:145px;top:429.5px;line-height:20px;height:20px;font-size:13.4px;color:#3a3a3a">Nguyễn Lê Khánh Linh</div>
<div class="t" style="left:294px;width:130px;text-align:center;top:429.5px;line-height:20px;height:20px;font-size:13.3px;color:#3a3a3a">01/08/2009</div>
<div class="t" style="left:434px;top:429.5px;line-height:20px;height:20px;font-size:13.3px;color:#3a3a3a">6A1</div>
<div class="t" style="left:554px;top:429.5px;line-height:20px;height:20px;font-size:13.4px;color:#3a3a3a">Nam</div>
<div class="t" style="left:739px;top:429.5px;line-height:20px;height:20px;font-size:13.4px;color:#3a3a3a">256/27, Khu 8Th</div>
<div class="a" style="left:2px;top:456px;width:828px;height:31px;background:#ffffff"></div>
<div class="a" style="left:0px;top:487px;width:830px;height:1px;background:#e6e7ec"></div>
<div class="a" style="left:12px;top:464px;width:16px;height:16px;border:2px solid #5ab55e;border-radius:4px;background:transparent"></div>
<div class="t" style="left:45px;top:461.5px;line-height:20px;height:20px;font-size:13.3px;color:#3a3a3a">20210176</div>
<div class="t" style="left:145px;top:461.5px;line-height:20px;height:20px;font-size:13.4px;color:#3a3a3a">Nguyễn Ngọc Quỳnh ...</div>
<div class="t" style="left:294px;width:130px;text-align:center;top:461.5px;line-height:20px;height:20px;font-size:13.3px;color:#3a3a3a">19/03/2009</div>
<div class="t" style="left:434px;top:461.5px;line-height:20px;height:20px;font-size:13.3px;color:#3a3a3a">6A1</div>
<div class="t" style="left:554px;top:461.5px;line-height:20px;height:20px;font-size:13.4px;color:#3a3a3a">Nam</div>
<div class="t" style="left:739px;top:461.5px;line-height:20px;height:20px;font-size:13.4px;color:#3a3a3a">23, Khu 5Thành</div>
<div class="a" style="left:2px;top:488px;width:828px;height:31px;background:#f4f5f8"></div>
<div class="a" style="left:0px;top:519px;width:830px;height:1px;background:#e6e7ec"></div>
<div class="a" style="left:12px;top:496px;width:16px;height:16px;border:2px solid #5ab55e;border-radius:4px;background:transparent"></div>
<div class="t" style="left:45px;top:493.5px;line-height:20px;height:20px;font-size:13.3px;color:#3a3a3a">20210175</div>
<div class="t" style="left:145px;top:493.5px;line-height:20px;height:20px;font-size:13.4px;color:#3a3a3a">Hà Nhật Nam</div>
<div class="t" style="left:294px;width:130px;text-align:center;top:493.5px;line-height:20px;height:20px;font-size:13.3px;color:#3a3a3a">13/10/2009</div>
<div class="t" style="left:434px;top:493.5px;line-height:20px;height:20px;font-size:13.3px;color:#3a3a3a">6A1</div>
<div class="t" style="left:554px;top:493.5px;line-height:20px;height:20px;font-size:13.4px;color:#3a3a3a">Nữ</div>
<div class="t" style="left:739px;top:493.5px;line-height:20px;height:20px;font-size:13.4px;color:#3a3a3a">740, Khu 2Thành</div>
<div class="a" style="left:2px;top:520px;width:828px;height:31px;background:#ffffff"></div>
<div class="a" style="left:0px;top:551px;width:830px;height:1px;background:#e6e7ec"></div>
<div class="a" style="left:12px;top:528px;width:16px;height:16px;border:2px solid #5ab55e;border-radius:4px;background:transparent"></div>
<div class="t" style="left:45px;top:525.5px;line-height:20px;height:20px;font-size:13.3px;color:#3a3a3a">20210177</div>
<div class="t" style="left:145px;top:525.5px;line-height:20px;height:20px;font-size:13.4px;color:#3a3a3a">Nguyễn Thụy Ánh Ng...</div>
<div class="t" style="left:294px;width:130px;text-align:center;top:525.5px;line-height:20px;height:20px;font-size:13.3px;color:#3a3a3a">27/03/2009</div>
<div class="t" style="left:434px;top:525.5px;line-height:20px;height:20px;font-size:13.3px;color:#3a3a3a">6A1</div>
<div class="t" style="left:554px;top:525.5px;line-height:20px;height:20px;font-size:13.4px;color:#3a3a3a">Nam</div>
<div class="t" style="left:739px;top:525.5px;line-height:20px;height:20px;font-size:13.4px;color:#3a3a3a">87, Khu 4Thành p</div>
<div class="a" style="left:2px;top:552px;width:828px;height:31px;background:#f4f5f8"></div>
<div class="a" style="left:0px;top:583px;width:830px;height:1px;background:#e6e7ec"></div>
<div class="a" style="left:12px;top:560px;width:16px;height:16px;border:2px solid #5ab55e;border-radius:4px;background:transparent"></div>
<div class="t" style="left:45px;top:557.5px;line-height:20px;height:20px;font-size:13.3px;color:#3a3a3a">20210043</div>
<div class="t" style="left:145px;top:557.5px;line-height:20px;height:20px;font-size:13.4px;color:#3a3a3a">Huỳnh Bảo Duy</div>
<div class="t" style="left:294px;width:130px;text-align:center;top:557.5px;line-height:20px;height:20px;font-size:13.3px;color:#3a3a3a">22/03/2009</div>
<div class="t" style="left:434px;top:557.5px;line-height:20px;height:20px;font-size:13.3px;color:#3a3a3a">6A1</div>
<div class="t" style="left:554px;top:557.5px;line-height:20px;height:20px;font-size:13.4px;color:#3a3a3a">Nữ</div>
<div class="t" style="left:739px;top:557.5px;line-height:20px;height:20px;font-size:13.4px;color:#3a3a3a">Khu 7, Phường B</div>
<div class="a" style="left:34px;top:0px;width:1px;height:583px;background:#e6e7ec"></div>
<div class="a" style="left:134px;top:0px;width:1px;height:583px;background:#e6e7ec"></div>
<div class="a" style="left:294px;top:0px;width:1px;height:583px;background:#e6e7ec"></div>
<div class="a" style="left:424px;top:0px;width:1px;height:583px;background:#e6e7ec"></div>
<div class="a" style="left:544px;top:0px;width:1px;height:583px;background:#e6e7ec"></div>
<div class="a" style="left:629px;top:0px;width:1px;height:583px;background:#e6e7ec"></div>
<div class="a" style="left:729px;top:0px;width:1px;height:583px;background:#e6e7ec"></div>
<div class="a" style="left:0px;top:0px;width:2px;height:665px;background:#e3e3e3"></div>
<div class="a" style="left:829px;top:0px;width:1px;height:665px;background:#e6e6e6"></div>
<div class="a" style="left:2px;top:653px;width:828px;height:9px;background:#ececec"></div>
<div class="a" style="left:2px;top:653px;width:640px;height:8px;background:#a9a9a9;border-radius:4px"></div>
</div>
<div class="t" style="left:694px;top:1151.0px;line-height:20px;height:20px;font-size:13.4px;color:#333">Tổng số <b>16</b> học sinh</div>
<div class="t" style="left:1248px;top:1153.0px;line-height:20px;height:20px;font-size:13.4px;color:#333">Trang</div>
<div class="a" style="left:1289px;top:1148px;width:80px;height:40px;border:1px solid #e0e0e0;background:#fff"></div>
<div class="t" style="left:1301px;top:1152.0px;line-height:20px;height:20px;font-size:13.4px;color:#555">1</div>
<svg class="a" style="left:1345px;top:1154px;" width="14" height="20" viewBox="0 0 14 20"><path d="M2 8 L7 2.5 L12 8 Z M2 12 L7 17.5 L12 12 Z" fill="#999"/></svg>
<div class="t" style="left:1382px;top:1155.0px;line-height:20px;height:20px;font-size:13.8px;color:#333">trên tổng số <b>1</b> trang</div>
</div></div>
<div class="brd" style="left:202px;top:370px;width:1325px;height:818px;z-index:20"></div>
</body></html>
